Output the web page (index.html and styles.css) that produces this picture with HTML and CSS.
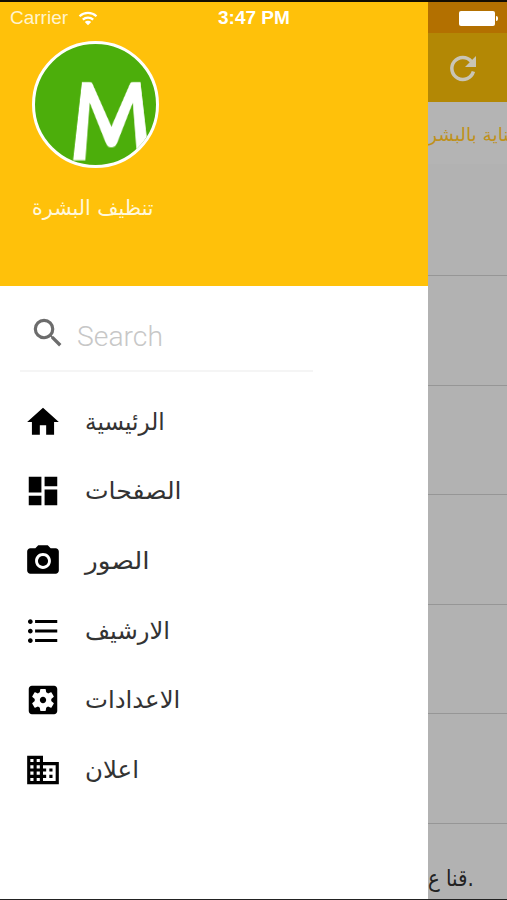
FILE: index.html
```html
<!DOCTYPE html>
<html lang="ar">
<head>
<meta charset="utf-8">
<title>تنظيف البشرة</title>
<link rel="stylesheet" href="styles.css">
</head>
<body>
<div class="screen">
  <aside class="drawer">
    <header class="profile">
      <div class="avatar"><span class="avatar-letter">M</span></div>
      <div class="profile-name"><bdi class="w-name">تنظيف البشرة</bdi></div>
    </header>
    <div class="search">
      <svg class="icon search-icon" viewBox="0 0 24 24"><path d="M15.5 14h-.79l-.28-.27A6.47 6.47 0 0 0 16 9.5 6.5 6.5 0 1 0 9.5 16c1.61 0 3.09-.59 4.23-1.57l.27.28v.79l5 4.99L20.49 19l-4.99-5zm-6 0a4.5 4.5 0 1 1 0-9 4.5 4.5 0 0 1 0 9z"/></svg>
      <span class="search-hint">Search</span>
    </div>
    <nav class="menu">
      <a class="item"><svg class="icon" viewBox="0 0 24 24"><path d="M10 20v-6h4v6h5v-8h3L12 3 2 12h3v8z"/></svg><bdi class="w-home">الرئيسية</bdi></a>
      <a class="item"><svg class="icon" viewBox="0 0 24 24"><path d="M3 13h8V3H3v10zm0 8h8v-6H3v6zm10 0h8V11h-8v10zm0-18v6h8V3h-8z"/></svg><bdi class="w-pages">الصفحات</bdi></a>
      <a class="item"><svg class="icon" viewBox="0 0 24 24"><circle cx="12" cy="12" r="3.2"/><path d="M9 2L7.17 4H4c-1.1 0-2 .9-2 2v12c0 1.1.9 2 2 2h16c1.1 0 2-.9 2-2V6c0-1.1-.9-2-2-2h-3.17L15 2H9zm3 15c-2.76 0-5-2.24-5-5s2.24-5 5-5 5 2.24 5 5-2.24 5-5 5z"/></svg><bdi class="w-photos">الصور</bdi></a>
      <a class="item"><svg class="icon" viewBox="0 0 24 24"><path d="M4 10.5c-.83 0-1.5.67-1.5 1.5s.67 1.5 1.5 1.5 1.5-.67 1.5-1.5-.67-1.5-1.5-1.5zm0-6c-.83 0-1.5.67-1.5 1.5S3.17 7.5 4 7.5 5.5 6.83 5.5 6 4.83 4.5 4 4.5zm0 12c-.83 0-1.5.68-1.5 1.5s.68 1.5 1.5 1.5 1.5-.68 1.5-1.5-.67-1.5-1.5-1.5zM7 19h14v-2H7v2zm0-6h14v-2H7v2zm0-8v2h14V5H7z"/></svg><bdi class="w-archive">الارشيف</bdi></a>
      <a class="item"><svg class="icon" viewBox="0 0 24 24"><path d="M12 10c-1.1 0-2 .9-2 2s.9 2 2 2 2-.9 2-2-.9-2-2-2zm7-7H5c-1.11 0-2 .9-2 2v14c0 1.1.89 2 2 2h14c1.11 0 2-.9 2-2V5c0-1.1-.89-2-2-2zm-1.75 9c0 .23-.02.46-.05.68l1.48 1.16c.13.11.17.3.08.45l-1.4 2.42c-.09.15-.27.21-.43.15l-1.74-.7c-.36.28-.76.51-1.18.69l-.26 1.85c-.03.17-.18.3-.35.3h-2.8c-.17 0-.32-.13-.35-.29l-.26-1.85c-.43-.18-.82-.41-1.18-.69l-1.74.7c-.16.06-.34 0-.43-.15l-1.4-2.42c-.09-.15-.05-.34.08-.45l1.48-1.16c-.03-.23-.05-.46-.05-.69 0-.23.02-.46.05-.68l-1.48-1.16c-.13-.11-.17-.3-.08-.45l1.4-2.42c.09-.15.27-.21.43-.15l1.74.7c.36-.28.76-.51 1.18-.69l.26-1.85c.03-.17.18-.3.35-.3h2.8c.17 0 .32.13.35.29l.26 1.85c.43.18.82.41 1.18.69l1.74-.7c.16-.06.34 0 .43.15l1.4 2.42c.09.15.05.34-.08.45l-1.48 1.16c.03.23.05.46.05.69z"/></svg><bdi class="w-settings">الاعدادات</bdi></a>
      <a class="item"><svg class="icon" viewBox="0 0 24 24"><path d="M12 7V3H2v18h20V7H12zM6 19H4v-2h2v2zm0-4H4v-2h2v2zm0-4H4V9h2v2zm0-4H4V5h2v2zm4 12H8v-2h2v2zm0-4H8v-2h2v2zm0-4H8V9h2v2zm0-4H8V5h2v2zm10 12h-8v-2h2v-2h-2v-2h2v-2h-2V9h8v10zm-2-8h-2v2h2v-2zm0 4h-2v2h2v-2z"/></svg><bdi class="w-ad">اعلان</bdi></a>
    </nav>
  </aside>
  <main class="content">
    <div class="status-bg"></div>
    <div class="toolbar"><svg class="refresh" viewBox="0 0 28 28"><path class="arc" d="M22.3 6.4A11 11 0 1 0 24.4 16.5"/><path class="head" d="M27 1v11H16z"/></svg></div>
    <div class="tab"><bdi class="w-tab">عناية بالبشر</bdi></div>
    <div class="row first"></div>
    <div class="row"></div>
    <div class="row"></div>
    <div class="row"></div>
    <div class="row"></div>
    <div class="row"></div>
    <div class="row last"><span class="w-row">قنا ع.&lrm;</span></div>
  </main>
  <div class="status">
    <span class="carrier">Carrier</span>
    <svg class="wifi" viewBox="0 0 20 15"><path class="wave" d="M1.5 5.2a12.3 12.3 0 0 1 17 0M4.8 8.6a7.6 7.6 0 0 1 10.4 0"/><path class="dot" d="M6.8 11a4.6 4.6 0 0 1 6.4 0L10 14.2z"/></svg>
    <span class="time">3:47 PM</span>
    <span class="battery"></span>
  </div>
</div>
</body>
</html>
```
FILE: styles.css
```css
* { box-sizing: border-box; }
body { margin: 0; font-family: "DejaVu Sans", sans-serif; }
.screen {
  position: relative;
  display: flex;
  width: 507px;
  height: 900px;
  overflow: hidden;
  border-top: 2px solid #130d02;
  border-bottom: 1px solid #222;
  background: #b2b2b2;
}
bdi, .w-row { display: inline-block; white-space: nowrap; transform-origin: 0 50%; }
.w-name { transform: scaleX(.98); }
.w-home { transform: scaleX(.965); }
.w-pages { transform: scaleX(1.045); }
.w-photos { transform: scaleX(1.1); }
.w-archive { transform: scaleX(1.01); }
.w-settings { transform: scaleX(1.015); }
.w-ad { transform: scaleX(1.02); }
.w-row { transform: scaleX(.86); }
.drawer { width: 428px; background: #fff; }
.profile { height: 284px; padding: 39px 0 0 32px; background: #ffc10a; }
.avatar {
  width: 127px;
  height: 127px;
  border: 3px solid #fff;
  border-radius: 50%;
  background: #4cae0b;
  overflow: hidden;
}
.avatar-letter {
  display: block;
  width: 100px;
  margin-left: 26px;
  padding-top: 12px;
  font: 500 108px/120px Lato, sans-serif;
  text-align: center;
  color: #fff;
  -webkit-text-stroke: 3.4px #fff;
  transform-origin: 50% 86%;
  transform: perspective(300px) rotateX(42deg) scaleY(1.66) scaleX(.89);
}
.profile-name { margin-top: 22px; font-size: 21px; line-height: 36px; color: #fff8dc; }
.search {
  display: flex;
  align-items: center;
  width: 293px;
  height: 86px;
  margin-left: 20px;
  padding: 12px 0 0 9px;
  border-bottom: 2px solid #f5f5f5;
}
.icon { flex: none; width: 38px; height: 38px; fill: #000; }
.search-icon { margin-top: -2px; fill: #6c6c6c; }
.search-hint { margin-left: 10px; padding-top: 5px; font: 300 28.3px/36px Roboto, sans-serif; color: #c7c7c7; }
.menu { display: flex; flex-direction: column; padding: 15px 0 0 24px; }
.item { display: flex; align-items: center; height: 69.6px; font-size: 24px; color: #333; }
.item bdi { margin-left: 23px; line-height: 40px; }
.content { width: 79px; overflow: hidden; }
.status-bg { height: 31px; background: #b37000; }
.toolbar { height: 69px; padding: 22px 0 0 21px; background: #b38805; }
.refresh { display: block; width: 28px; height: 28px; }
.arc { fill: none; stroke: #c9c5b6; stroke-width: 3.5; }
.head { fill: #c9c5b6; }
.tab { display: flex; justify-content: flex-start; height: 62px; padding-top: 18px; background: #b4b4b4; font-size: 18.5px; line-height: 30px; color: #bf911c; }
.row { height: 109.6px; border-bottom: 1px solid #969696; }
.row.first { height: 112px; }
.row.last { height: 80px; padding-top: 36px; border: 0; font-size: 23px; line-height: 36px; color: #222; }
.status {
  position: absolute;
  inset: 0 0 auto 0;
  display: grid;
  grid-template-columns: 58px 22px 1fr 39px;
  align-items: center;
  height: 32px;
  padding: 0 9px 0 10px;
  font: 19px/24px "Liberation Sans", sans-serif;
  color: #fff;
}
.carrier { color: #fff4cf; }
.wifi { width: 20px; height: 15px; margin-left: 10px; overflow: visible; }
.wave { fill: none; stroke: #fff; stroke-width: 2.2; }
.dot { fill: #fff; }
.time { margin-left: 128px; font-weight: 700; white-space: nowrap; }
.battery { position: relative; width: 36px; height: 15px; border-radius: 2px; background: #fff; }
.battery::after { content: ""; position: absolute; left: 37px; top: 5px; width: 2px; height: 5px; border-radius: 0 2px 2px 0; background: #fff; }
```
